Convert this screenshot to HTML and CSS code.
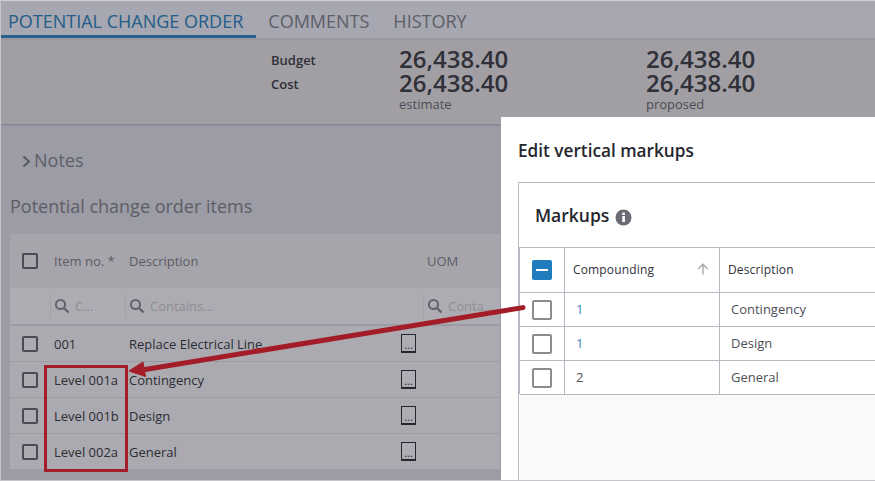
FILE: index.html
```html
<!DOCTYPE html>
<html lang="en">
<head>
<meta charset="utf-8">
<title>Potential change order</title>
<link rel="stylesheet" href="styles.css">
</head>
<body>
<div class="page">
  <nav class="tabs">
    <span class="tab active">POTENTIAL CHANGE ORDER</span>
    <span class="tab">COMMENTS</span>
    <span class="tab">HISTORY</span>
  </nav>
  <section class="summary">
    <div class="labels"><span>Budget</span><span>Cost</span></div>
    <div class="figures first"><b>26,438.40</b><b>26,438.40</b><small>estimate</small></div>
    <div class="figures"><b>26,438.40</b><b>26,438.40</b><small>proposed</small></div>
  </section>
  <div class="notes">
    <svg class="chev" width="9" height="13" viewBox="0 0 9 13"><path d="M1.5 1.5 7 6.5 1.5 11.5" fill="none" stroke="#55565f" stroke-width="1.8"/></svg>
    <span>Notes</span>
  </div>
  <h2 class="items-title">Potential change order items</h2>
  <div class="grid">
    <div class="g-row g-head">
      <span class="cell-check"><i class="box"></i></span><span>Item no. *</span><span>Description</span><span></span><span>UOM</span>
    </div>
    <div class="g-row g-filter">
      <span></span>
      <span class="flt"><svg class="lens" width="16" height="16" viewBox="0 0 16 16"><circle cx="6.5" cy="6.5" r="4.6" fill="none" stroke="#62636c" stroke-width="2"/><path d="M10 10l4.5 4.5" stroke="#62636c" stroke-width="2.4"/></svg>C...</span>
      <span class="flt"><svg class="lens" width="16" height="16" viewBox="0 0 16 16"><circle cx="6.5" cy="6.5" r="4.6" fill="none" stroke="#62636c" stroke-width="2"/><path d="M10 10l4.5 4.5" stroke="#62636c" stroke-width="2.4"/></svg>Contains...</span>
      <span></span>
      <span class="flt"><svg class="lens" width="16" height="16" viewBox="0 0 16 16"><circle cx="6.5" cy="6.5" r="4.6" fill="none" stroke="#62636c" stroke-width="2"/><path d="M10 10l4.5 4.5" stroke="#62636c" stroke-width="2.4"/></svg>Conta...</span>
    </div>
    <div class="g-row g-item"><span class="cell-check"><i class="box"></i></span><span>001</span><span>Replace Electrical Line</span><span class="cell-more"><i class="more">...</i></span><span></span></div>
    <div class="g-row g-item"><span class="cell-check"><i class="box"></i></span><span>Level 001a</span><span>Contingency</span><span class="cell-more"><i class="more">...</i></span><span></span></div>
    <div class="g-row g-item"><span class="cell-check"><i class="box"></i></span><span>Level 001b</span><span>Design</span><span class="cell-more"><i class="more">...</i></span><span></span></div>
    <div class="g-row g-item"><span class="cell-check"><i class="box"></i></span><span>Level 002a</span><span>General</span><span class="cell-more"><i class="more">...</i></span><span></span></div>
  </div>

  <aside class="modal">
    <h1>Edit vertical markups</h1>
    <div class="card">
      <h3>Markups <svg class="info" width="17" height="17" viewBox="0 0 17 17"><circle cx="8.5" cy="8.5" r="8" fill="#6a6b75"/><rect x="7.3" y="7" width="2.6" height="6" fill="#fff"/><rect x="7.3" y="3.6" width="2.6" height="2.4" fill="#fff"/></svg></h3>
      <div class="m-table">
        <div class="m-row m-head">
          <span class="m-check"><i class="minus"></i></span>
          <span class="m-comp">Compounding<svg width="12" height="12" viewBox="0 0 12 12"><path d="M6 11.5V1.5M1.2 6 6 1.2 10.8 6" fill="none" stroke="#a9a9a9" stroke-width="1.4"/></svg></span>
          <span>Description</span>
        </div>
        <div class="m-row"><span class="m-check"><i class="mbox"></i></span><span class="num">1</span><span>Contingency</span></div>
        <div class="m-row"><span class="m-check"><i class="mbox"></i></span><span class="num">1</span><span>Design</span></div>
        <div class="m-row"><span class="m-check"><i class="mbox"></i></span><span class="num dark">2</span><span>General</span></div>
        <div class="m-empty"></div>
      </div>
    </div>
  </aside>

  <div class="callout"></div>
  <svg class="arrow" width="875" height="481" viewBox="0 0 875 481">
    <path d="M523 307.6 142 370" stroke="#a31c28" stroke-width="5" stroke-linecap="round" fill="none"/>
    <path d="M129 371 143 362 145.500 376.500Z" fill="#a31c28" stroke="#a31c28" stroke-width="1"/>
  </svg>
</div>
</body>
</html>
```
FILE: styles.css
```css
* { box-sizing: border-box; }
html, body { margin: 0; padding: 0; }
body { width: 875px; height: 481px; overflow: hidden; font-family: "Open Sans", "Noto Sans", sans-serif; }
.page { position: relative; width: 875px; height: 481px; background: #9b9ca6; border-top: 1px solid #cfcfd3; border-left: 1px solid #c6c6ca; border-bottom: 1px solid #c6c6ca; overflow: hidden; }

.tabs { display: flex; height: 39px; background: #a6a7b0; border-bottom: 2px solid #9a99a2; }
.tab { height: 37px; padding: 0 12px 0 7px; margin-right: 12px; font-size: 18px; line-height: 41px; color: #5d5e68; }
.tab.active { color: #235d8a; border-bottom: 3px solid #27628f; margin-right: 0; padding-right: 13px; height: 37px; }
.tab:nth-child(2) { padding-left: 12px; margin-right: 0; }
.tab:nth-child(3) { padding-left: 12px; }

.summary { display: flex; height: 84px; background: #a19fa4; box-shadow: 0 1px 2px #7c7c84; padding-left: 270px; }
.labels { display: flex; flex: none; flex-direction: column; width: 128px; padding-top: 8px; font-size: 13px; font-weight: 600; color: #2f3038; line-height: 24px; }
.figures { display: flex; flex: none; flex-direction: column; width: 247px; color: #2f3038; }
.figures b { font-size: 24px; font-weight: 600; line-height: 24px; }
.figures b:first-child { margin-top: 7px; }
.figures small { font-size: 13px; line-height: 18px; color: #4c4d57; }

.notes { display: flex; align-items: center; gap: 3px; height: 24px; margin: 24px 0 0 21px; font-size: 18px; color: #5d5e68; }
.chev { margin-top: 3px; }
.items-title { margin: 22px 0 0 9px; font-size: 18px; font-weight: 400; line-height: 24px; color: #5e5c64; height: 25px; }

.grid { width: 490px; margin: 15px 0 0 9px; background: #abaab0; }
.g-row { display: grid; grid-template-columns: 44px 75px 274px 24px 73px; align-items: center; font-size: 13px; color: #2c2d35; }
.g-head { height: 54px; background: #a6a5ab; color: #5c5c66; }
.g-filter { height: 38px; background: #adacb2; color: #8c8c94; border-bottom: 2px solid #9c9ba3; }
.g-item { height: 36px; border-bottom: 1px solid #9c9ba3; }
.g-item:last-child { border-bottom: 0; height: 35px; }
.flt { display: flex; align-items: center; gap: 5px; height: 24px; margin-left: -4px; padding-left: 3px; border-left: 1px solid #a2a1a8; overflow: hidden; white-space: nowrap; }
.lens { flex: none; }
.cell-check { padding-left: 12px; display: flex; }
.box { display: block; width: 16px; height: 16px; border: 2px solid #4a4b54; border-radius: 2px; }
.cell-more { margin-left: -2px; display: flex; }
.more { display: block; width: 15px; height: 19px; border: 1.5px solid #26272e; border-bottom-width: 2px; font-style: normal; font-size: 11px; line-height: 20px; text-align: center; color: #26272e; background: #aeadb3; }

.modal { position: absolute; left: 500px; top: 116px; width: 375px; height: 364px; background: #fff; padding: 20px 0 0 17px; }
.modal h1 { margin: 0; font-size: 17.2px; font-weight: 600; line-height: 28px; color: #25262e; }
.card { margin-top: 17px; height: 299px; border: 1px solid #b9b9c6; border-right: 0; border-bottom: 0; }
.card h3 { display: flex; align-items: center; gap: 6px; height: 64px; margin: 0; padding: 0 0 0 16px; font-size: 17.5px; font-weight: 600; color: #25262e; }
.info { margin-top: 4px; }
.m-table { display: flex; flex-direction: column; height: 234px; }
.m-row { display: grid; grid-template-columns: 45px 155px 1fr; height: 34px; border-top: 1px solid #b9b9c6; font-size: 13px; color: #4d4e58; }
.m-row > span { display: flex; align-items: center; padding: 0 0 2px 11px; border-left: 1px solid #b9b9c6; }
.m-head { height: 45px; font-size: 12px; color: #2f3039; letter-spacing: 0.15px; }
.m-head > span { padding-left: 8px; }
.m-comp.m-comp { justify-content: space-between; padding-right: 10px; }
.m-check.m-check { padding: 0 0 0 12px; }
.num { color: #3a86c6; }
.num.dark { color: #4d4e58; }
.minus { display: block; position: relative; width: 20px; height: 20px; background: #217cbd; border-radius: 2px; }
.minus::after { content: ""; position: absolute; left: 4px; right: 4px; top: 9px; height: 2px; background: #fff; }
.mbox { display: block; width: 20px; height: 20px; border: 2px solid #8c8c8c; border-radius: 2px; }
.m-empty { flex: 1; background: #f9f9f9; border-top: 1px solid #b9b9c6; margin-left: 1px; }

.callout { position: absolute; left: 43px; top: 364px; width: 84px; height: 107px; border: 3px solid #a31c28; }
.arrow { position: absolute; left: -1px; top: -1px; pointer-events: none; }
```
